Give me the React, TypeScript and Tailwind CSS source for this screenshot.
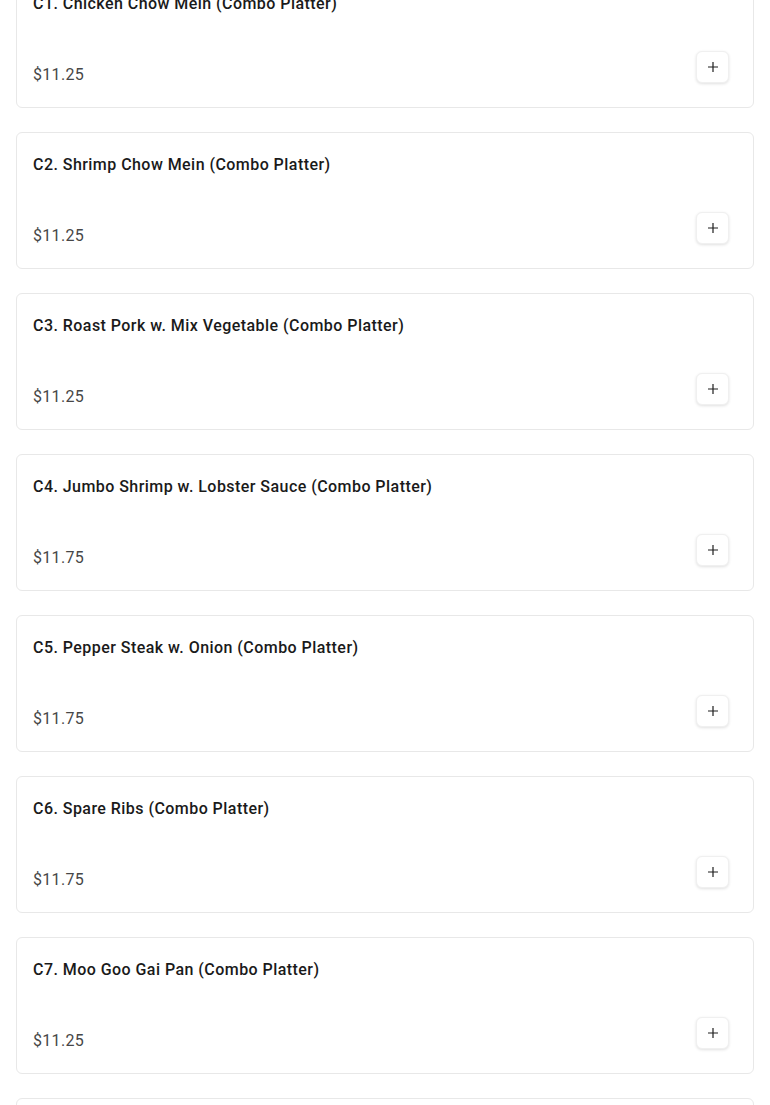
import React from 'react';

type Item = { name: string; price: string };

const items: Item[] = [
  { name: 'C1. Chicken Chow Mein (Combo Platter)', price: '$11.25' },
  { name: 'C2. Shrimp Chow Mein (Combo Platter)', price: '$11.25' },
  { name: 'C3. Roast Pork w. Mix Vegetable (Combo Platter)', price: '$11.25' },
  { name: 'C4. Jumbo Shrimp w. Lobster Sauce (Combo Platter)', price: '$11.75' },
  { name: 'C5. Pepper Steak w. Onion (Combo Platter)', price: '$11.75' },
  { name: 'C6. Spare Ribs (Combo Platter)', price: '$11.75' },
  { name: 'C7. Moo Goo Gai Pan (Combo Platter)', price: '$11.25' },
  { name: 'C8. Chicken w. Broccoli (Combo Platter)', price: '$11.25' },
];

const PlusIcon = () => (
  <svg width="10" height="10" viewBox="0 0 10 10" fill="none" stroke="#1f1f1f" strokeWidth="1.2">
    <path d="M5 0v10M0 5h10" />
  </svg>
);

const MenuCard: React.FC<{ item: Item }> = ({ item }) => (
  <div className="bg-white border border-[#e8e8e8] rounded-md pl-4 pr-6 pt-5 pb-5">
    <h3 className="text-[16px] leading-6 font-medium text-[#1a1a1a] tracking-[0.45px]">{item.name}</h3>
    <div className="mt-[35px] flex items-end justify-between">
      <span className="text-[16px] leading-6 text-[#474747] tracking-[0.3px]">{item.price}</span>
      <button className="mb-1 w-[33px] h-8 flex items-center justify-center rounded-md bg-white border border-[#f0f0f0] shadow-[0_1px_3px_rgba(0,0,0,0.12)]">
        <PlusIcon />
      </button>
    </div>
  </div>
);

export default function App() {
  return (
    <div className="bg-white min-h-screen overflow-hidden h-[1105px]" style={{ fontFamily: 'Roboto, "Noto Sans", sans-serif' }}>
      <div className="mx-4 -mt-[29px] flex flex-col gap-6">
        {items.map((it) => (
          <MenuCard key={it.name} item={it} />
        ))}
      </div>
    </div>
  );
}
